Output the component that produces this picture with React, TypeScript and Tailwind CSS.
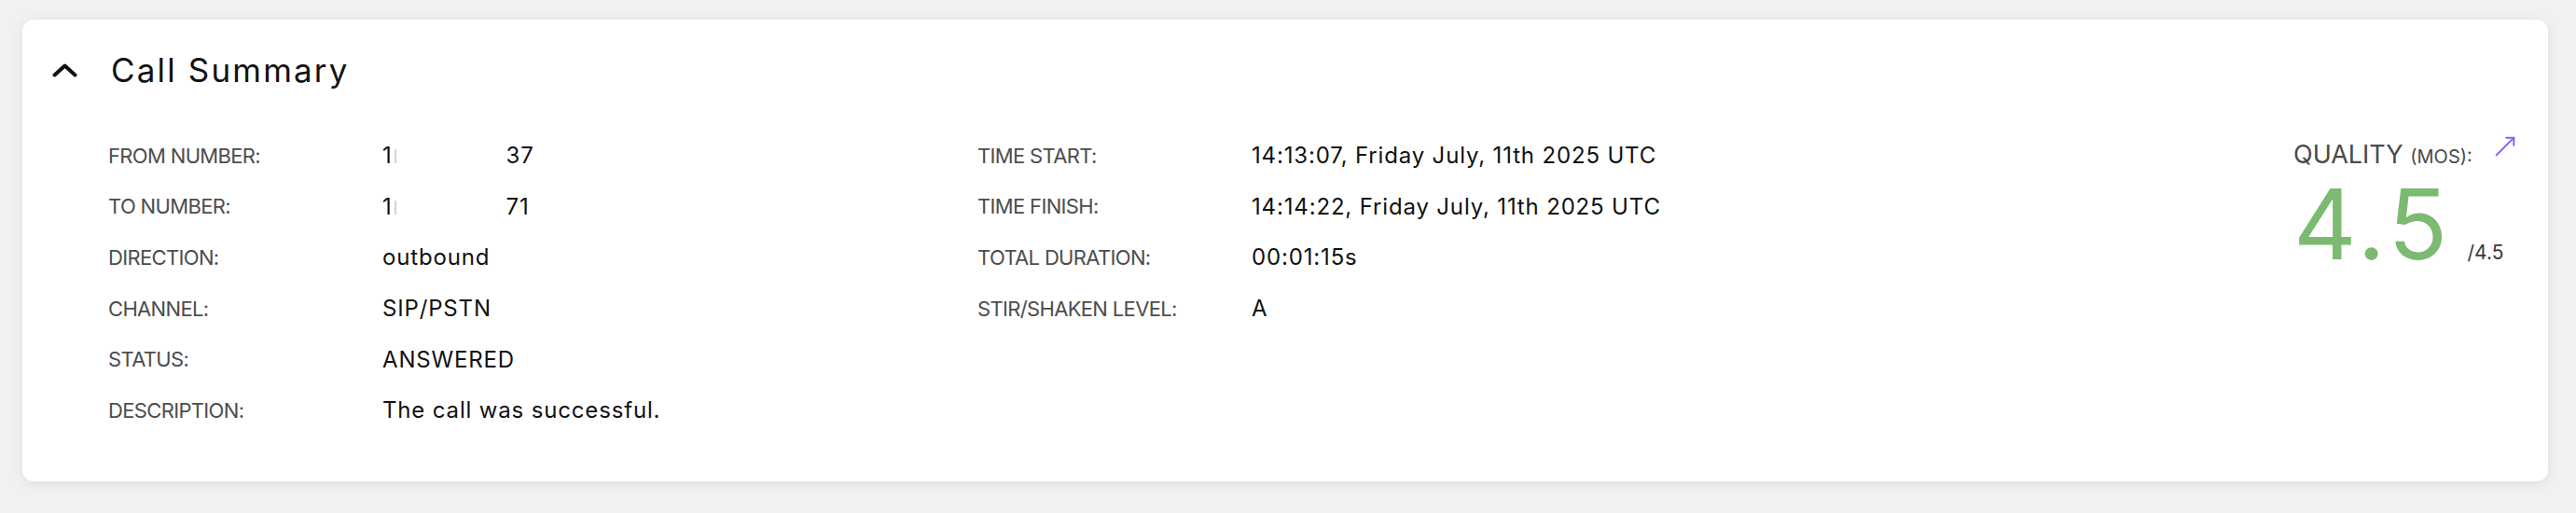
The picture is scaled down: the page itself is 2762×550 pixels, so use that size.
import { MoveUpRight } from "lucide-react";

type Field = { label: string; value: React.ReactNode };

function Redacted({ tail }: { tail: string }) {
  return (
    <span className="inline-flex items-baseline">
      <span>1</span>
      <span className="ml-[2px] inline-block h-[15px] w-[2px] bg-[#d4d4d4]" />
      <span className="inline-block w-[118px]" />
      <span>{tail}</span>
    </span>
  );
}

const left: Field[] = [
  { label: "FROM NUMBER:", value: <Redacted tail="37" /> },
  { label: "TO NUMBER:", value: <Redacted tail="71" /> },
  { label: "DIRECTION:", value: "outbound" },
  { label: "CHANNEL:", value: "SIP/PSTN" },
  { label: "STATUS:", value: "ANSWERED" },
  { label: "DESCRIPTION:", value: "The call was successful." },
];

const right: Field[] = [
  { label: "TIME START:", value: "14:13:07, Friday July, 11th 2025 UTC" },
  { label: "TIME FINISH:", value: "14:14:22, Friday July, 11th 2025 UTC" },
  { label: "TOTAL DURATION:", value: "00:01:15s" },
  { label: "STIR/SHAKEN LEVEL:", value: "A" },
];

function FieldList({ fields }: { fields: Field[] }) {
  return (
    <div className="flex flex-col">
      {fields.map((f) => (
        <div key={f.label} className="flex h-[54.6px] items-center">
          <span className="w-[294px] shrink-0 text-[22px] tracking-[-0.03em] text-[#4d4d4d]">{f.label}</span>
          <span className="text-[24px] tracking-[0.035em] text-[#111]">{f.value}</span>
        </div>
      ))}
    </div>
  );
}

export default function App() {
  return (
    <div
      className="h-[550px] bg-[#f1f1f3] pt-[21px] pl-[24px] pr-[30px]"
      style={{ fontFamily: "Inter, 'Noto Sans', sans-serif" }}
    >
      <div className="rounded-[12px] bg-white pt-[24px] pb-[48px] shadow-[0_2px_14px_rgba(0,0,0,0.08)]">
        <div className="ml-[32px] flex h-[60px] items-center gap-[36px]">
          <svg width="27" height="15" viewBox="0 0 27 15" fill="none">
            <path d="M2.5 12.5 13.5 2.5 24.5 12.5" stroke="#111" strokeWidth="4" strokeLinecap="round" strokeLinejoin="round" />
          </svg>
          <h2 className="text-[35px] font-normal tracking-[0.062em] text-[#111]">Call Summary</h2>
        </div>

        <div className="mt-[35px] flex pl-[92px] pr-[30px]">
          <div className="w-[932px] shrink-0">
            <FieldList fields={left} />
          </div>
          <div className="flex-1">
            <FieldList fields={right} />
          </div>
          <div className="w-[243px] shrink-0">
            <div className="flex items-start justify-between">
              <div className="mt-[12px] text-[27px] leading-none text-[#4a4a4a]">
                QUALITY <span className="text-[20px]">(MOS):</span>
              </div>
              <MoveUpRight size={32} strokeWidth={1.5} className="mt-[1px] text-[#8b5cf6]" />
            </div>
            <div className="mt-[21px] flex items-baseline">
              <span className="text-[105px] leading-[80px] tracking-[0.04em] text-[#7cba72]">4.5</span>
              <span className="ml-[17px] text-[21px] leading-none text-[#3a3a3a]">/4.5</span>
            </div>
          </div>
        </div>
      </div>
    </div>
  );
}
